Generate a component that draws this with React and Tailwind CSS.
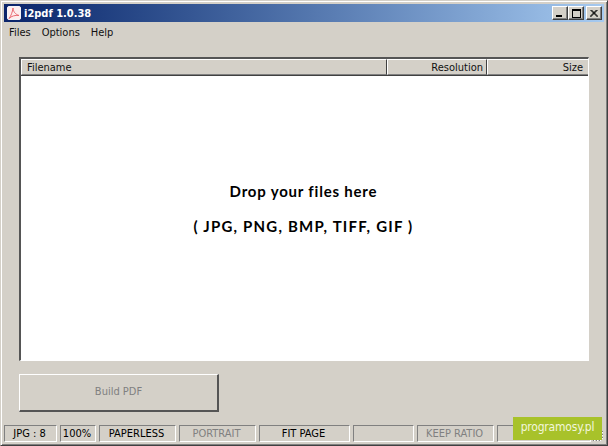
const ui = { fontFamily: '"DejaVu Sans Condensed","Liberation Sans",sans-serif' };

function Cell({ w, children, dim, cls = "" }) {
  return (
    <div
      className={`h-[17px] flex items-center justify-center pr-[2px] border-t border-l border-t-[#808080] border-l-[#808080] border-r border-b border-r-white border-b-white text-[11px] leading-none ${dim ? "text-[#808080]" : "text-black"} ${cls}`}
      style={{ width: w }}
    >
      {children}
    </div>
  );
}

function CapButton({ children }) {
  return (
    <div className="w-4 h-[14px] bg-[#d4d0c8] border-t border-l border-t-white border-l-white border-r border-b border-r-[#404040] border-b-[#404040] shadow-[inset_-1px_-1px_0_#808080] flex items-center justify-center">
      {children}
    </div>
  );
}

function Header({ w, right, last, pr, children }) {
  return (
    <div
      className={`h-[16px] flex items-center px-[5px] border-t border-l border-t-white border-l-white border-b border-b-[#808080] ${last ? "" : "border-r border-r-[#404040]"} ${right ? "justify-end" : ""} ${w ? "" : "flex-1"}`}
      style={w ? { width: w, paddingRight: pr } : undefined}
    >
      <span className="text-[11px] leading-none text-[#111]">{children}</span>
    </div>
  );
}

export default function App() {
  return (
    <div className="w-[608px] h-[446px] bg-[#d4d0c8] relative overflow-hidden flex flex-col border-t border-l border-t-[#d4d0c8] border-l-[#d4d0c8] border-r border-b border-r-[#404040] border-b-[#404040] shadow-[inset_1px_1px_0_white,inset_-1px_-1px_0_#808080] p-[3px]" style={ui}>
      <div className="h-[18px] flex items-center justify-between bg-gradient-to-r from-[#0a246a] to-[#a6caf0] pl-[3px] pr-[2px] shrink-0">
        <div className="flex items-center gap-[3px]">
          <svg width="14" height="14" viewBox="0 0 14 14">
            <rect x="0.5" y="0.5" width="13" height="13" rx="1.5" fill="#fdeeee" stroke="#f4f4f8" />
            <path d="M6 2 C6.5 6 8 8 12 9.5 C8 9 4.5 10 2 12.5 C4 10 5.5 6 6 2Z" fill="none" stroke="#ea6a72" strokeWidth="1" />
          </svg>
          <span className="text-white text-[11px] font-bold leading-none">i2pdf 1.0.38</span>
        </div>
        <div className="flex items-center">
          <CapButton><div className="w-[6px] h-[2px] bg-black mt-[6px] mr-[2px]" /></CapButton>
          <CapButton><div className="w-[9px] h-[9px] border border-black border-t-2" /></CapButton>
          <div className="w-[2px]" />
          <CapButton>
            <svg width="8" height="7" viewBox="0 0 8 7"><path d="M0.5 0 L7.5 7 M1.5 0 L8 6.5 M7.5 0 L0.5 7 M6.5 0 L0 6.5" stroke="#000" strokeWidth="1" /></svg>
          </CapButton>
        </div>
      </div>

      <div className="h-[20px] flex items-center gap-[11px] px-[5px] text-[11px] leading-none text-[#111] shrink-0">
        <span>Files</span>
        <span>Options</span>
        <span>Help</span>
      </div>

      <div className="flex-1 flex flex-col px-[15px] pt-[15px] min-h-0">
        <div className="h-[304px] flex flex-col border-t-2 border-l-2 border-t-[#555] border-l-[#555] border-r border-b border-r-white border-b-white">
          <div className="flex bg-[#d4d0c8] shrink-0 border-b border-b-[#404040]">
            <Header w={366}>Filename</Header>
            <Header w={100} right pr={3}>Resolution</Header>
            <Header right last>Size</Header>
          </div>
          <div className="flex-1 bg-white flex flex-col items-center justify-center gap-[15px] pb-[19px] text-black text-[15px] font-bold leading-[20px]" style={{ fontFamily: '"Lato","Open Sans",sans-serif' }}>
            <div className="tracking-[0.8px] pr-[2px]">Drop your files here</div>
            <div className="tracking-[1.2px] pr-[2px]">( JPG, PNG, BMP, TIFF, GIF )</div>
          </div>
        </div>

        <div className="mt-[13px] w-[200px] h-[38px] flex items-center justify-center border-t border-l border-t-white border-l-white border-r-2 border-b-2 border-r-[#555] border-b-[#555] text-[11px] text-[#808080]">
          Build PDF
        </div>
      </div>

      <div className="flex gap-[3px] shrink-0">
        <Cell w={53}>JPG : 8</Cell>
        <Cell w={36}>100%</Cell>
        <Cell w={77}>PAPERLESS</Cell>
        <Cell w={77} dim>PORTRAIT</Cell>
        <Cell w={91}>FIT PAGE</Cell>
        <Cell w={61} />
        <Cell w={77} dim>KEEP RATIO</Cell>
        <Cell w={94} />
      </div>

      <svg className="absolute right-[3px] bottom-[3px]" width="12" height="12" viewBox="0 0 12 12">
        <path d="M11 1 L1 11 M11 4 L4 11 M11 7 L7 11" stroke="#808080" strokeWidth="1" />
        <path d="M11 2 L2 11 M11 5 L5 11 M11 8 L8 11" stroke="#fff" strokeWidth="1" />
      </svg>

      <div className="absolute right-[5px] bottom-[5px] w-[89px] h-[23px] bg-[#a8c22a] flex items-center justify-center pb-[3px] text-[12px] tracking-[-0.2px] text-[#f2f6dc] leading-none">
        programosy.pl
      </div>
    </div>
  );
}
